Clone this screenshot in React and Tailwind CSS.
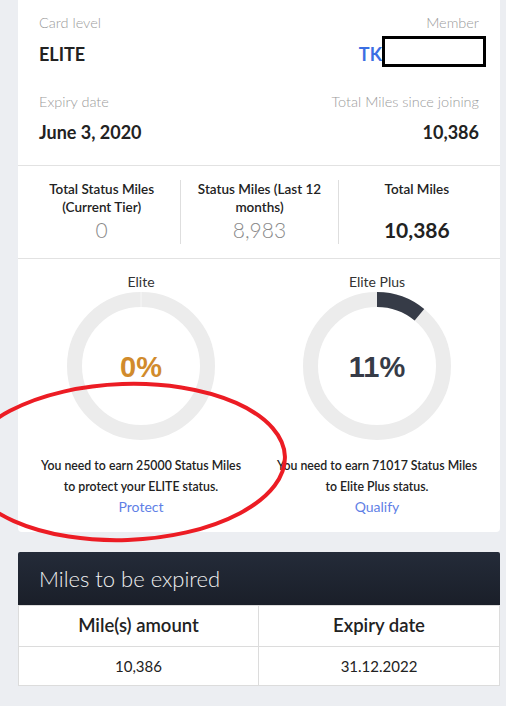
import React from "react";

const F = { fontFamily: "Lato, 'Open Sans', 'Liberation Sans', sans-serif" };
const ARIAL = { fontFamily: "'Liberation Sans', Arial, sans-serif" };

function Ring({ pct, color, label }) {
  const r = 66.5;
  const c = 2 * Math.PI * r;
  const len = (pct / 100) * c;
  return (
    <div className="relative w-[148px] h-[148px]">
      <svg width="148" height="148" viewBox="0 0 148 148" className="absolute inset-0">
        <circle cx="74" cy="74" r={r} fill="none" stroke="#ececec" strokeWidth="15" />
        {pct > 0 ? (
          <circle
            cx="74"
            cy="74"
            r={r}
            fill="none"
            stroke="#363b47"
            strokeWidth="15"
            strokeDasharray={`${len} ${c}`}
            transform="rotate(-90 74 74)"
          />
        ) : (
          <line x1="74" y1="0" x2="74" y2="15" stroke="#f7f7f7" strokeWidth="1" />
        )}
      </svg>
      <div
        className="absolute inset-0 flex items-center justify-center pt-[3px] text-[29px] font-bold"
        style={{ ...ARIAL, color }}
      >
        {label}
      </div>
    </div>
  );
}

export default function App() {
  return (
    <div className="relative w-[506px] h-[706px] overflow-hidden bg-[#eceef2]" style={F}>
      <div className="ml-[18px] w-[482px]">
        {/* Card */}
        <div className="bg-white rounded-b-[4px]">
          {/* Top section */}
          <div className="h-[166px] border-b border-[#e2e2e2] px-[21px] pt-[14px] flex justify-between">
            <div className="flex flex-col">
              <div className="text-[14.5px] leading-[18px] text-[#9b9b9b] font-light">Card level</div>
              <div className="mt-[11px] text-[18px] leading-[22px] font-bold text-[#222]">ELITE</div>
              <div className="mt-[28px] text-[14.5px] leading-[18px] text-[#9b9b9b] font-light">Expiry date</div>
              <div className="mt-[10px] text-[18px] leading-[22px] font-bold text-[#222]">June 3, 2020</div>
            </div>
            <div className="flex flex-col items-end">
              <div className="text-[14.5px] leading-[18px] text-[#9b9b9b] font-light">Member</div>
              <div className="mt-[11px] flex items-center text-[18px] leading-[22px] font-bold text-[#3b6fe3]">
                <span>TK</span>
                <span className="relative inline-block w-[97px] h-[22px]">
                  <span className="absolute left-0 top-[-7px] w-[104px] h-[31px] border-[3px] border-black bg-white" />
                </span>
              </div>
              <div className="mt-[28px] text-[14.5px] leading-[18px] text-[#9b9b9b] font-light">Total Miles since joining</div>
              <div className="mt-[10px] text-[18px] leading-[22px] font-bold text-[#222]">10,386</div>
            </div>
          </div>

          {/* Stats */}
          <div className="h-[93px] border-b border-[#e2e2e2] px-[5px] pt-[14px] grid grid-cols-3">
            <div className="h-[64px] flex flex-col items-center justify-between text-center">
              <div className="text-[13.5px] leading-[18px] font-semibold text-[#222]">Total Status Miles<br />(Current Tier)</div>
              <div className="text-[21px] leading-[28px] font-light text-[#8a8a8a]">0</div>
            </div>
            <div className="h-[64px] border-l border-[#dedede] flex flex-col items-center justify-between text-center">
              <div className="text-[13.5px] leading-[18px] font-semibold text-[#222]">Status Miles (Last 12<br />months)</div>
              <div className="text-[21px] leading-[28px] font-light text-[#8a8a8a]">8,983</div>
            </div>
            <div className="h-[64px] border-l border-[#dedede] flex flex-col items-center justify-between text-center">
              <div className="text-[13.5px] leading-[18px] font-semibold text-[#222]">Total Miles</div>
              <div className="text-[21px] leading-[28px] font-bold text-[#222]">10,386</div>
            </div>
          </div>

          {/* Rings */}
          <div className="h-[273px] px-[5px] pt-[15px] grid grid-cols-2">
            <div className="flex flex-col items-center">
              <div className="text-[14px] leading-[16px] text-[#333]">Elite</div>
              <div className="mt-[2px]"><Ring pct={0} color="#d18b2c" label="0%" /></div>
              <div className="mt-[15px] text-[12.3px] leading-[21px] font-semibold text-[#222] text-center">
                You need to earn 25000 Status Miles<br />to protect your ELITE status.
              </div>
              <div className="text-[14px] leading-[19px] text-[#5f7fe6]">Protect</div>
            </div>
            <div className="flex flex-col items-center">
              <div className="text-[14px] leading-[16px] text-[#333]">Elite Plus</div>
              <div className="mt-[2px]"><Ring pct={11} color="#363b47" label="11%" /></div>
              <div className="mt-[15px] text-[12.3px] leading-[21px] font-semibold text-[#222] text-center">
                You need to earn 71017 Status Miles<br />to Elite Plus status.
              </div>
              <div className="text-[14px] leading-[19px] text-[#5f7fe6]">Qualify</div>
            </div>
          </div>
        </div>

        {/* Miles to be expired */}
        <div className="mt-[20px]">
          <div className="h-[53px] rounded-t-[2px] bg-gradient-to-b from-[#242b39] to-[#1a1f29] flex items-center pl-[21px]">
            <span className="text-[22px] font-light text-[#f0f0f0]">Miles to be expired</span>
          </div>
          <div className="grid grid-cols-2 border border-[#dcdcdc] bg-white">
            <div className="h-[41px] flex items-center justify-center text-[18.5px] font-semibold text-[#222] border-r border-b border-[#dcdcdc]">Mile(s) amount</div>
            <div className="h-[41px] flex items-center justify-center text-[18.5px] font-semibold text-[#222] border-b border-[#dcdcdc]">Expiry date</div>
            <div className="h-[38px] flex items-center justify-center text-[15px] text-[#222] border-r border-[#dcdcdc]">10,386</div>
            <div className="h-[38px] flex items-center justify-center text-[15px] text-[#222]">31.12.2022</div>
          </div>
        </div>
      </div>

      {/* Red annotation ellipse */}
      <svg className="absolute left-0 top-0 pointer-events-none" width="506" height="706" viewBox="0 0 506 706">
        <ellipse cx="125" cy="462" rx="160" ry="78" fill="none" stroke="#ec1c24" strokeWidth="4" transform="rotate(-2 125 462)" />
      </svg>
    </div>
  );
}
